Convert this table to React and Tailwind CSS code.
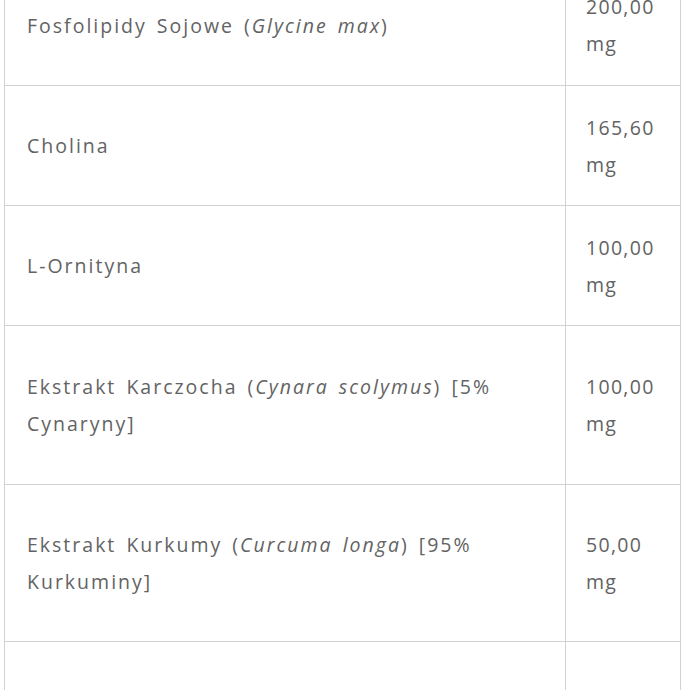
import React from 'react';

const rows = [
  { name: <>Fosfolipidy Sojowe (<i>Glycine max</i>)</>, value: '200,00', h: 'h-[121px]' },
  { name: 'Cholina', value: '165,60', h: 'h-[120px]' },
  { name: 'L-Ornityna', value: '100,00', h: 'h-[120px]' },
  { name: <>Ekstrakt Karczocha (<i>Cynara scolymus</i>) [5% Cynaryny]</>, value: '100,00', h: 'h-[159px]' },
  { name: <>Ekstrakt Kurkumy (<i>Curcuma longa</i>) [95% Kurkuminy]</>, value: '50,00', h: 'h-[157px]' },
  { name: '', value: '', h: 'h-[120px]' },
];

const App = () => {
  return (
    <div className="w-[690px] h-[690px] overflow-hidden bg-white">
      <div
        className="ml-[4px] mt-[-35px] w-[677px] border-l border-r border-[#d2d2d2] text-[19.5px] leading-[37px] text-[#636363]"
        style={{ fontFamily: '"Open Sans", "Noto Sans", sans-serif' }}
      >
        {rows.map((row, i) => (
          <div key={i} className={`grid grid-cols-[561px_1fr] border-b border-[#d2d2d2] ${row.h}`}>
            <div className="flex items-center pl-[22px] pr-[22px] border-r border-[#d2d2d2] tracking-[2px] [word-spacing:3px]">
              <span>{row.name}</span>
            </div>
            <div className="flex items-center pl-[20px] pr-[4px] tracking-[1.3px]">
              {row.value && (
                <span>
                  {row.value}
                  <br />
                  mg
                </span>
              )}
            </div>
          </div>
        ))}
      </div>
    </div>
  );
};

export default App;
